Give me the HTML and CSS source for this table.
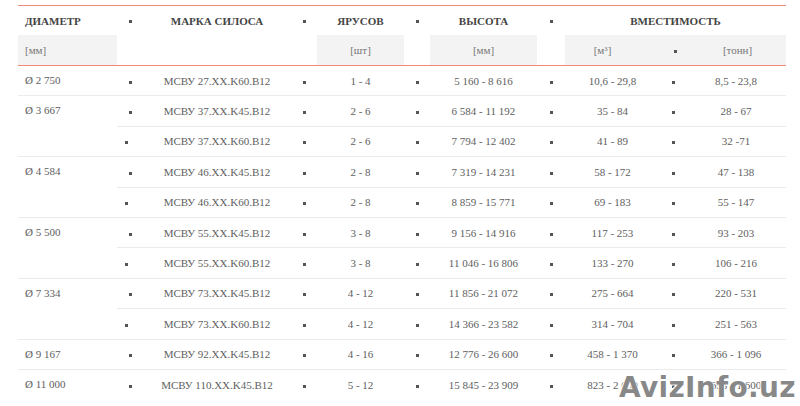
FILE: index.html
```html
<!DOCTYPE html>
<html lang="ru">
<head>
<meta charset="utf-8">
<title>Силосы</title>
<link rel="stylesheet" href="styles.css">
</head>
<body>
<div class="page">
<table class="silo">
  <colgroup>
    <col class="c-diam"><col class="c-b"><col class="c-mark"><col class="c-b"><col class="c-yar"><col class="c-b"><col class="c-vys"><col class="c-b4"><col class="c-m3"><col class="c-b"><col class="c-ton">
  </colgroup>
  <thead>
    <tr class="h1">
      <th class="left">ДИАМЕТР</th><th class="b"><i></i></th>
      <th>МАРКА СИЛОСА</th><th class="b"><i></i></th>
      <th>ЯРУСОВ</th><th class="b"><i></i></th>
      <th>ВЫСОТА</th><th class="b"><i></i></th>
      <th colspan="3">ВМЕСТИМОСТЬ</th>
    </tr>
    <tr class="h2">
      <td class="g left">[мм]</td><td colspan="3"></td>
      <td class="g">[шт]</td><td></td>
      <td class="g">[мм]</td><td></td>
      <td class="g m3">[м³]</td><td class="g b hb"><i></i></td><td class="g ton">[тонн]</td>
    </tr>
  </thead>
  <tbody>
    <tr><td class="left">Ø 2 750</td><td class="b"><i></i></td><td>МСВУ 27.XX.K60.B12</td><td class="b"><i></i></td><td>1 - 4</td><td class="b"><i></i></td><td>5 160 - 8 616</td><td class="b"><i></i></td><td>10,6 - 29,8</td><td class="b"><i></i></td><td>8,5 - 23,8</td></tr>
    <tr><td class="left" rowspan="2">Ø 3 667</td><td class="b"><i></i></td><td>МСВУ 37.XX.K45.B12</td><td class="b"><i></i></td><td>2 - 6</td><td class="b"><i></i></td><td>6 584 - 11 192</td><td class="b"><i></i></td><td>35 - 84</td><td class="b"><i></i></td><td>28 - 67</td></tr>
    <tr><td class="b sb"><i></i></td><td>МСВУ 37.XX.K60.B12</td><td class="b"><i></i></td><td>2 - 6</td><td class="b"><i></i></td><td>7 794 - 12 402</td><td class="b"><i></i></td><td>41 - 89</td><td class="b"><i></i></td><td>32 -71</td></tr>
    <tr><td class="left" rowspan="2">Ø 4 584</td><td class="b"><i></i></td><td>МСВУ 46.XX.K45.B12</td><td class="b"><i></i></td><td>2 - 8</td><td class="b"><i></i></td><td>7 319 - 14 231</td><td class="b"><i></i></td><td>58 - 172</td><td class="b"><i></i></td><td>47 - 138</td></tr>
    <tr><td class="b sb"><i></i></td><td>МСВУ 46.XX.K60.B12</td><td class="b"><i></i></td><td>2 - 8</td><td class="b"><i></i></td><td>8 859 - 15 771</td><td class="b"><i></i></td><td>69 - 183</td><td class="b"><i></i></td><td>55 - 147</td></tr>
    <tr><td class="left" rowspan="2">Ø 5 500</td><td class="b"><i></i></td><td>МСВУ 55.XX.K45.B12</td><td class="b"><i></i></td><td>3 - 8</td><td class="b"><i></i></td><td>9 156 - 14 916</td><td class="b"><i></i></td><td>117 - 253</td><td class="b"><i></i></td><td>93 - 203</td></tr>
    <tr><td class="b sb"><i></i></td><td>МСВУ 55.XX.K60.B12</td><td class="b"><i></i></td><td>3 - 8</td><td class="b"><i></i></td><td>11 046 - 16 806</td><td class="b"><i></i></td><td>133 - 270</td><td class="b"><i></i></td><td>106 - 216</td></tr>
    <tr><td class="left" rowspan="2">Ø 7 334</td><td class="b"><i></i></td><td>МСВУ 73.XX.K45.B12</td><td class="b"><i></i></td><td>4 - 12</td><td class="b"><i></i></td><td>11 856 - 21 072</td><td class="b"><i></i></td><td>275 - 664</td><td class="b"><i></i></td><td>220 - 531</td></tr>
    <tr><td class="b sb"><i></i></td><td>МСВУ 73.XX.K60.B12</td><td class="b"><i></i></td><td>4 - 12</td><td class="b"><i></i></td><td>14 366 - 23 582</td><td class="b"><i></i></td><td>314 - 704</td><td class="b"><i></i></td><td>251 - 563</td></tr>
    <tr><td class="left">Ø 9 167</td><td class="b"><i></i></td><td>МСВУ 92.XX.K45.B12</td><td class="b"><i></i></td><td>4 - 16</td><td class="b"><i></i></td><td>12 776 - 26 600</td><td class="b"><i></i></td><td>458 - 1 370</td><td class="b"><i></i></td><td>366 - 1 096</td></tr>
    <tr class="last"><td class="left">Ø 11 000</td><td class="b"><i></i></td><td>МСВУ 110.XX.K45.B12</td><td class="b"><i></i></td><td>5 - 12</td><td class="b"><i></i></td><td>15 845 - 23 909</td><td class="b"><i></i></td><td>823 - 2 000</td><td class="b"><i></i></td><td>655 - 1 600</td></tr>
  </tbody>
</table>
<div class="watermark">AvizInfo.uz</div>
</div>
</body>
</html>
```

FILE: styles.css
```css
html, body {
  margin: 0;
  padding: 0;
  background: #fff;
}

.page {
  position: relative;
  width: 800px;
  height: 406px;
  overflow: hidden;
  padding: 5px 0 0 18px;
  box-sizing: border-box;
}

.silo {
  border-collapse: collapse;
  table-layout: fixed;
  width: 768px;
  font-family: "Liberation Serif", "Times New Roman", serif;
  font-size: 11px;
  color: #606060;
  border-top: 1px solid #f08a7c;
}

.c-diam { width: 99px; }
.c-b { width: 26px; }
.c-b4 { width: 28px; }
.c-mark { width: 148px; }
.c-yar { width: 87px; }
.c-vys { width: 107px; }
.c-m3 { width: 95px; }
.c-ton { width: 100px; }

.silo th,
.silo td {
  padding: 0;
  text-align: center;
  vertical-align: middle;
  white-space: nowrap;
}

.silo .left {
  text-align: left;
  padding-left: 7px;
}

.h1 th {
  height: 29px;
  font-weight: bold;
  color: #444;
}

.h2 td {
  height: 30px;
  color: #777;
  border-bottom: 1px solid #f08a7c;
}

.h2 .g {
  background: #f3f3f3;
}

.h2 .m3 {
  padding-right: 20px;
}

.h2 .hb {
  padding-left: 5px;
}

.h2 .ton {
  padding-left: 3px;
}

tbody td {
  height: 29.4px;
  border-bottom: 1px solid #ebebeb;
}

tbody td.left {
  vertical-align: top;
  line-height: 29.4px;
}

tbody tr.last td {
  border-bottom: none;
}

.b i {
  display: inline-block;
  width: 3px;
  height: 3px;
  background: #555;
  vertical-align: middle;
}

.b.sb {
  padding-right: 8px;
}

.watermark {
  position: absolute;
  left: 619px;
  top: 371px;
  font-family: "DejaVu Sans", sans-serif;
  font-weight: bold;
  font-size: 28px;
  line-height: 34px;
  letter-spacing: 0.3px;
  color: rgba(115, 115, 115, 0.85);
  text-shadow: 0 0 1px #fff, 1px 1px 0 rgba(255, 255, 255, 0.9), -1px -1px 0 rgba(255, 255, 255, 0.9);
}
```
